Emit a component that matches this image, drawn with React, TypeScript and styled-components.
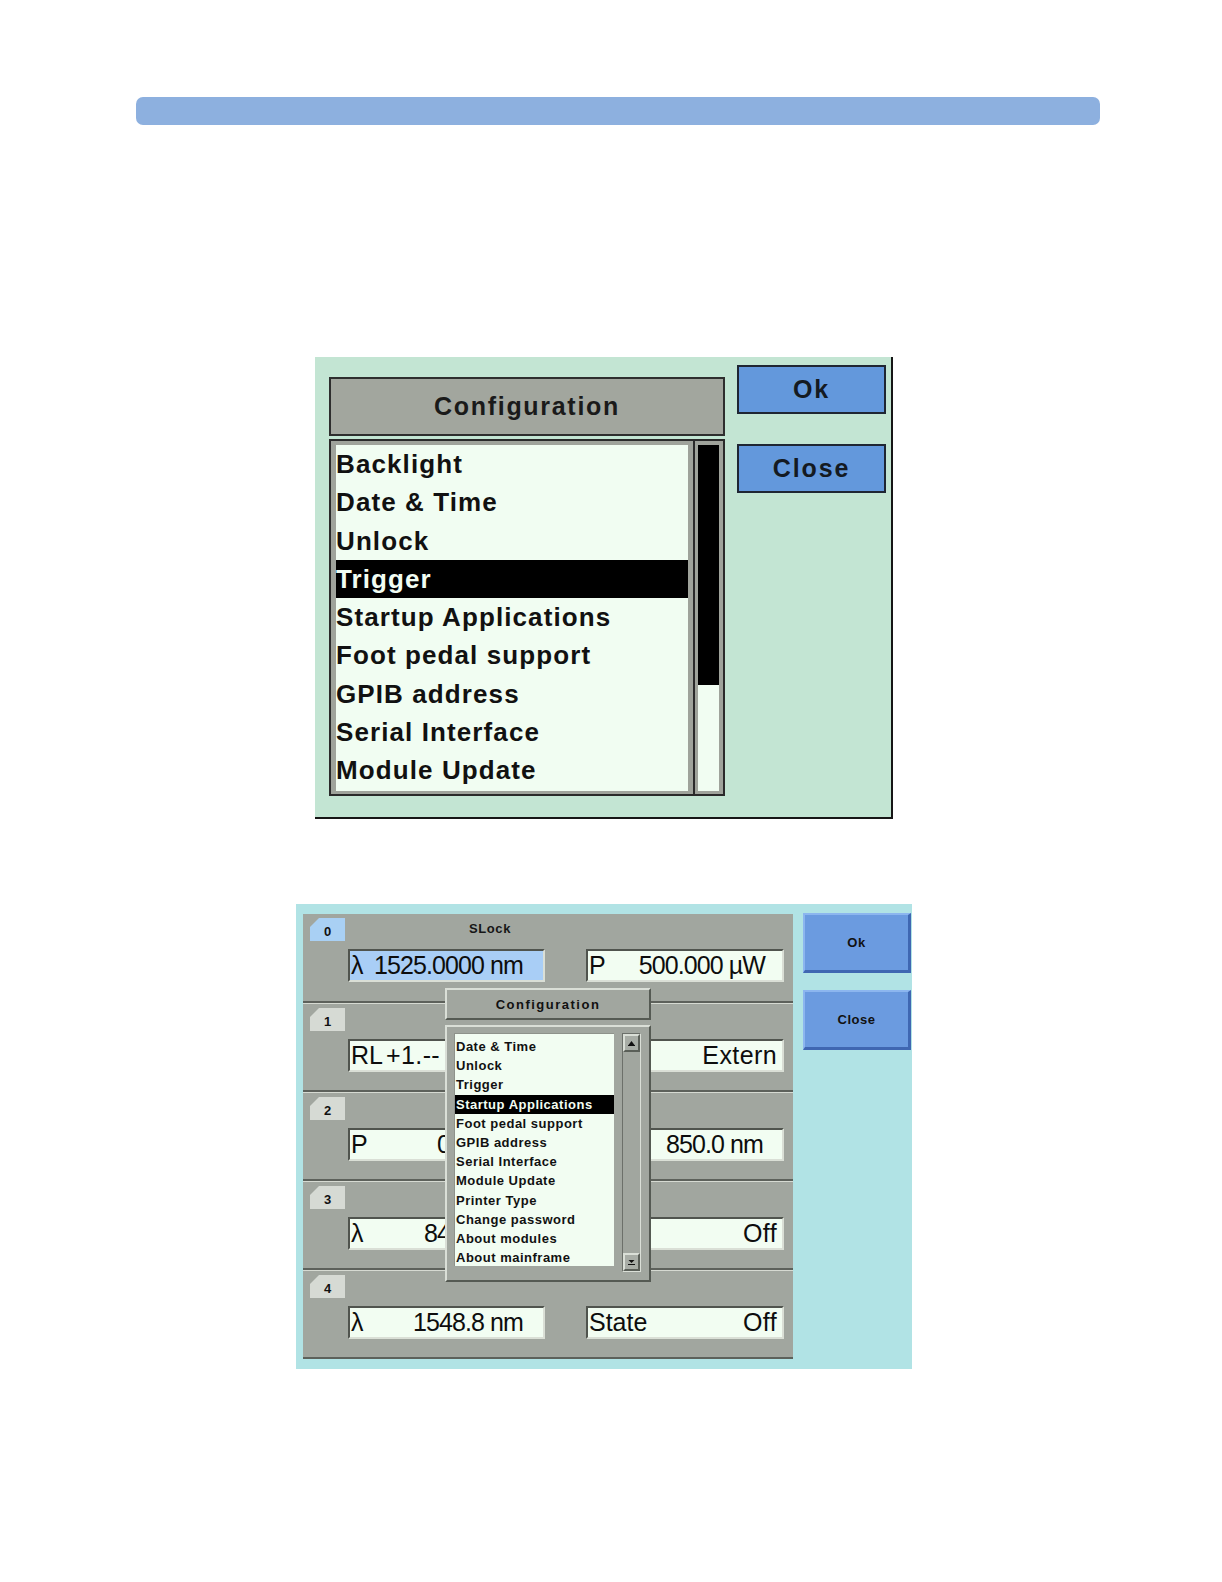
import React from 'react';
import styled, { createGlobalStyle } from 'styled-components';

const GlobalStyle = createGlobalStyle`
  html, body {
    margin: 0;
    padding: 0;
    background: #fff;
  }
  body {
    font-family: "Liberation Sans", Arial, sans-serif;
    color: #111;
  }
`;

const Page = styled.div`
  display: flex;
  flex-direction: column;
  align-items: flex-start;
  width: 1222px;
  min-height: 1582px;
  padding-top: 97px;
  box-sizing: border-box;
`;

const TitleBar = styled.div`
  margin-left: 136px;
  width: 964px;
  height: 28px;
  border-radius: 7px;
  background: #8db0df;
`;

/* ---------- big configuration dialog ---------- */

const Dialog = styled.div`
  margin: 232px 0 0 315px;
  width: 578px;
  height: 462px;
  box-sizing: border-box;
  padding: 8px 0 0 14px;
  background: #c3e5d3;
  border-right: 2px solid #161616;
  border-bottom: 2px solid #161616;
  display: flex;
  align-items: flex-start;
  gap: 12px;
`;

const DialogMain = styled.div`
  width: 396px;
  margin-top: 12px;
  display: flex;
  flex-direction: column;
  gap: 3px;
`;

const DialogHeader = styled.div`
  height: 59px;
  box-sizing: border-box;
  border: 2px solid #2e2e2e;
  background: #a2a69e;
  display: flex;
  align-items: center;
  justify-content: center;
  font-size: 25px;
  font-weight: 700;
  letter-spacing: 1.7px;
  color: #1a1a1a;
`;

const ListArea = styled.div`
  display: flex;
  height: 357px;
`;

const ListBox = styled.div`
  width: 364px;
  box-sizing: border-box;
  border: 2px solid #2a2a2a;
  border-right: none;
  background: #9fa39b;
  padding: 4px 5px 3px 5px;
`;

const ListInner = styled.div`
  height: 100%;
  background: #f1fdf2;
`;

const BigItem = styled.div<{ $selected?: boolean }>`
  height: 38.25px;
  line-height: 38.25px;
  padding-left: 0;
  font-size: 26px;
  font-weight: 700;
  letter-spacing: 1.1px;
  white-space: nowrap;
  background: ${p => (p.$selected ? '#000' : 'transparent')};
  color: ${p => (p.$selected ? '#f1fdf2' : '#111')};
`;

const BigScroll = styled.div`
  width: 32px;
  box-sizing: border-box;
  border: 2px solid #2a2a2a;
  background: #9fa39b;
  padding: 4px 4px 3px 3px;
  display: flex;
  flex-direction: column;
`;

const BigThumb = styled.div`
  height: 240px;
  background: #000;
`;

const BigTrack = styled.div`
  flex: 1;
  background: #f1fdf2;
`;

const DialogButtons = styled.div`
  display: flex;
  flex-direction: column;
  gap: 30px;
`;

const BigButton = styled.div`
  width: 149px;
  height: 49px;
  box-sizing: border-box;
  border: 2px solid #1f2633;
  background: #6398dc;
  display: flex;
  align-items: center;
  justify-content: center;
  font-size: 25px;
  font-weight: 700;
  letter-spacing: 1.9px;
  color: #141a22;
`;

/* ---------- instrument screen ---------- */

const Screen = styled.div`
  margin: 85px 0 0 296px;
  width: 616px;
  height: 465px;
  box-sizing: border-box;
  padding: 10px 0 0 7px;
  background: #b1e3e5;
  display: flex;
  align-items: flex-start;
  gap: 10px;
`;

const ModulePanel = styled.div`
  position: relative;
  width: 490px;
  background: #a1a69f;
  display: flex;
  flex-direction: column;
`;

const ModuleRow = styled.div<{ $first?: boolean }>`
  height: 89px;
  box-sizing: border-box;
  padding-top: 4px;
  border-top: ${p => (p.$first ? 'none' : '1px solid #d6dad2')};
  border-bottom: 2px solid #5d615b;
  display: flex;
  flex-direction: column;
`;

const TabLine = styled.div`
  height: 23px;
  display: flex;
  align-items: center;
  padding-left: 7px;
`;

const Tab = styled.div<{ $active?: boolean }>`
  width: 35px;
  height: 23px;
  background: ${p => (p.$active ? '#a9d0f4' : '#d6dad4')};
  clip-path: polygon(9px 0, 100% 0, 100% 100%, 0 100%, 0 9px);
  display: flex;
  align-items: center;
  justify-content: center;
  padding-top: 4px;
  box-sizing: border-box;
  font-size: 13px;
  font-weight: 700;
  color: #111;
`;

const RowTitle = styled.div`
  margin-left: 124px;
  margin-top: -2px;
  font-size: 13px;
  font-weight: 700;
  letter-spacing: 0.6px;
  color: #161616;
`;

const FieldLine = styled.div`
  margin-top: 8px;
  padding-left: 45px;
  display: flex;
  gap: 41px;
`;

const Field = styled.div<{ $wide?: boolean; $blue?: boolean; $pad: number }>`
  width: ${p => (p.$wide ? 198 : 197)}px;
  height: 33px;
  box-sizing: border-box;
  border-top: 2px solid #50544e;
  border-left: 2px solid #50544e;
  border-bottom: 2px solid #dadfd6;
  border-right: 2px solid #dadfd6;
  background: ${p => (p.$blue ? '#a9cef6' : '#f2fdf2')};
  padding: 0 ${p => p.$pad}px 0 1px;
  display: flex;
  align-items: center;
  justify-content: space-between;
  font-size: 25px;
  color: #0d0d0d;
  white-space: nowrap;
  overflow: hidden;
`;

const FieldLabel = styled.span<{ $width?: number }>`
  display: inline-block;
  width: ${p => (p.$width ? `${p.$width}px` : 'auto')};
  flex-shrink: 0;
`;

const FieldValue = styled.span<{ $num?: boolean; $clip?: number }>`
  display: inline-block;
  letter-spacing: ${p => (p.$num ? '-0.9px' : '0.4px')};
  ${p => (p.$clip !== undefined ? `width: ${p.$clip}px; overflow: hidden; margin-right: auto;` : '')}
`;

const SideButtons = styled.div`
  display: flex;
  flex-direction: column;
  gap: 17px;
  margin-top: -1px;
`;

const SideButton = styled.div`
  width: 108px;
  height: 60px;
  box-sizing: border-box;
  border-top: 2px solid #8cb6ef;
  border-left: 2px solid #8cb6ef;
  border-bottom: 3px solid #3f67b2;
  border-right: 3px solid #3f67b2;
  background: #6b9be0;
  display: flex;
  align-items: center;
  justify-content: center;
  font-size: 13px;
  font-weight: 700;
  letter-spacing: 0.5px;
  color: #111;
`;

/* ---------- popup menu over the screen ---------- */

const Popup = styled.div`
  position: absolute;
  left: 142px;
  top: 74px;
  width: 206px;
  display: flex;
  flex-direction: column;
  gap: 5px;
  background: #a1a69f;
`;

const PopupHeader = styled.div`
  height: 32px;
  box-sizing: border-box;
  border-top: 2px solid #dadfd7;
  border-left: 2px solid #dadfd7;
  border-bottom: 2px solid #555a53;
  border-right: 2px solid #555a53;
  display: flex;
  align-items: center;
  justify-content: center;
  font-size: 13px;
  font-weight: 700;
  letter-spacing: 1.5px;
  color: #111;
`;

const PopupBody = styled.div`
  height: 257px;
  box-sizing: border-box;
  border-top: 2px solid #dadfd7;
  border-left: 2px solid #dadfd7;
  border-bottom: 2px solid #555a53;
  border-right: 2px solid #555a53;
  padding: 6px 8px 8px 7px;
  display: flex;
  align-items: flex-start;
  gap: 8px;
`;

const PopupList = styled.div`
  width: 160px;
  height: 233px;
  box-sizing: border-box;
  padding-top: 3px;
  background: #f2fdf2;
  border-top: 1px solid #8e928b;
  border-left: 1px solid #8e928b;
`;

const SmallItem = styled.div<{ $selected?: boolean }>`
  height: 19.2px;
  line-height: 19.2px;
  padding-left: 1px;
  font-size: 13px;
  font-weight: 700;
  letter-spacing: 0.5px;
  white-space: nowrap;
  background: ${p => (p.$selected ? '#000' : 'transparent')};
  color: ${p => (p.$selected ? '#f2fdf2' : '#111')};
`;

const SmallScroll = styled.div`
  width: 19px;
  height: 239px;
  box-sizing: border-box;
  border-top: 1px solid #6c706a;
  border-left: 1px solid #6c706a;
  border-bottom: 1px solid #dadfd7;
  border-right: 1px solid #dadfd7;
  background: #a1a69f;
  display: flex;
  flex-direction: column;
  justify-content: space-between;
`;

const ArrowButton = styled.div`
  height: 18px;
  box-sizing: border-box;
  border-top: 2px solid #dadfd7;
  border-left: 2px solid #dadfd7;
  border-bottom: 2px solid #5a5f58;
  border-right: 2px solid #5a5f58;
  background: #a8ada6;
  display: flex;
  align-items: center;
  justify-content: center;
`;

const Arrow = ({ down }: { down?: boolean }) => (
  <svg width="9" height="6" viewBox="0 0 9 6">
    {down ? (
      <>
        <polygon points="1.5,1 7.5,1 4.5,4" fill="#111" />
        <rect x="1" y="5" width="7" height="1" fill="#111" />
      </>
    ) : (
      <>
        <polygon points="1.5,5 7.5,5 4.5,1" fill="#111" />
        <rect x="1" y="5" width="7" height="1" fill="#111" />
      </>
    )}
  </svg>
);

const bigItems = [
  'Backlight',
  'Date & Time',
  'Unlock',
  'Trigger',
  'Startup Applications',
  'Foot pedal support',
  'GPIB address',
  'Serial Interface',
  'Module Update',
];

const smallItems = [
  'Date & Time',
  'Unlock',
  'Trigger',
  'Startup Applications',
  'Foot pedal support',
  'GPIB address',
  'Serial Interface',
  'Module Update',
  'Printer Type',
  'Change password',
  'About modules',
  'About mainframe',
];

interface FieldData {
  label: string;
  value: string;
  pad: number;
  num?: boolean;
  // fields partly hidden under the popup: where the value starts and how much is visible
  labelWidth?: number;
  clip?: number;
}

interface ModuleData {
  slot: string;
  title?: string;
  left: FieldData;
  right: FieldData;
}

const modules: ModuleData[] = [
  {
    slot: '0',
    title: 'SLock',
    left: { label: 'λ', value: '1525.0000 nm', pad: 20, num: true },
    right: { label: 'P', value: '500.000 µW', pad: 17, num: true },
  },
  {
    slot: '1',
    left: { label: 'RL', value: '+1.--', pad: 0, labelWidth: 35, clip: 58 },
    right: { label: '', value: 'Extern', pad: 5 },
  },
  {
    slot: '2',
    left: { label: 'P', value: '0.000', pad: 0, num: true, labelWidth: 86, clip: 8 },
    right: { label: '', value: '850.0 nm', pad: 19, num: true },
  },
  {
    slot: '3',
    left: { label: 'λ', value: '848.0', pad: 0, num: true, labelWidth: 73, clip: 22 },
    right: { label: '', value: 'Off', pad: 5 },
  },
  {
    slot: '4',
    left: { label: 'λ', value: '1548.8 nm', pad: 20, num: true },
    right: { label: 'State', value: 'Off', pad: 5 },
  },
];

const ModuleField: React.FC<{ data: FieldData; wide?: boolean; blue?: boolean }> = ({ data, wide, blue }) => (
  <Field $wide={wide} $blue={blue} $pad={data.pad}>
    <FieldLabel $width={data.labelWidth}>{data.label}</FieldLabel>
    <FieldValue $num={data.num} $clip={data.clip}>
      {data.value}
    </FieldValue>
  </Field>
);

const App: React.FC = () => {
  return (
    <>
      <GlobalStyle />
      <Page>
        <TitleBar />

        <Dialog>
          <DialogMain>
            <DialogHeader>Configuration</DialogHeader>
            <ListArea>
              <ListBox>
                <ListInner>
                  {bigItems.map(item => (
                    <BigItem key={item} $selected={item === 'Trigger'}>
                      {item}
                    </BigItem>
                  ))}
                </ListInner>
              </ListBox>
              <BigScroll>
                <BigThumb />
                <BigTrack />
              </BigScroll>
            </ListArea>
          </DialogMain>
          <DialogButtons>
            <BigButton>Ok</BigButton>
            <BigButton>Close</BigButton>
          </DialogButtons>
        </Dialog>

        <Screen>
          <ModulePanel>
            {modules.map((m, i) => (
              <ModuleRow key={m.slot} $first={i === 0}>
                <TabLine>
                  <Tab $active={i === 0}>{m.slot}</Tab>
                  {m.title && <RowTitle>{m.title}</RowTitle>}
                </TabLine>
                <FieldLine>
                  <ModuleField data={m.left} blue={i === 0} />
                  <ModuleField data={m.right} wide />
                </FieldLine>
              </ModuleRow>
            ))}

            <Popup>
              <PopupHeader>Configuration</PopupHeader>
              <PopupBody>
                <PopupList>
                  {smallItems.map(item => (
                    <SmallItem key={item} $selected={item === 'Startup Applications'}>
                      {item}
                    </SmallItem>
                  ))}
                </PopupList>
                <SmallScroll>
                  <ArrowButton>
                    <Arrow />
                  </ArrowButton>
                  <ArrowButton>
                    <Arrow down />
                  </ArrowButton>
                </SmallScroll>
              </PopupBody>
            </Popup>
          </ModulePanel>

          <SideButtons>
            <SideButton>Ok</SideButton>
            <SideButton>Close</SideButton>
          </SideButtons>
        </Screen>
      </Page>
    </>
  );
};

export default App;
